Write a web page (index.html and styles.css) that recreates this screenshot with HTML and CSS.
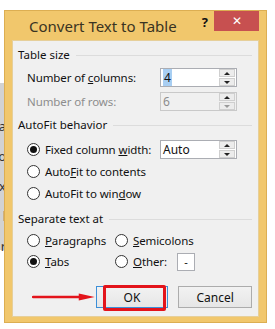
FILE: index.html
```html
<!DOCTYPE html>
<html lang="en">
<head>
  <meta charset="UTF-8">
  <title>Convert Text to Table</title>
  <link rel="stylesheet" href="styles.css">
</head>
<body>
  <div class="backdrop">
    <span>a</span>
    <span>o</span>
    <span>x</span>
    <span>l</span>
    <span>r</span>
  </div>

  <div class="dialog">
    <div class="titlebar">
      <div class="title">Convert Text to Table</div>
      <div class="help">?</div>
      <div class="close">&#x2715;</div>
    </div>

    <div class="client">
      <div class="group-head"><span>Table size</span></div>
      <div class="row field-row">
        <label class="lbl">Number of <u>c</u>olumns:</label>
        <div class="spin">
          <span class="val"><span class="sel">4</span></span>
          <div class="spin-btns">
            <span class="up"></span>
            <span class="down"></span>
          </div>
        </div>
      </div>
      <div class="row field-row disabled">
        <label class="lbl">Number of rows:</label>
        <div class="spin">
          <span class="val">6</span>
          <div class="spin-btns">
            <span class="up"></span>
            <span class="down"></span>
          </div>
        </div>
      </div>

      <div class="group-head autofit"><span>AutoFit behavior</span></div>
      <div class="row radio-row">
        <span class="radio on"></span>
        <span class="lbl radio-lbl">Fixed column <u>w</u>idth:</span>
        <div class="spin">
          <span class="val">Auto</span>
          <div class="spin-btns">
            <span class="up"></span>
            <span class="down"></span>
          </div>
        </div>
      </div>
      <div class="row radio-row">
        <span class="radio"></span>
        <span class="lbl">Auto<u>F</u>it to contents</span>
      </div>
      <div class="row radio-row">
        <span class="radio"></span>
        <span class="lbl">AutoFit to win<u>d</u>ow</span>
      </div>

      <div class="group-head separate"><span>Separate text at</span></div>
      <div class="row sep-row">
        <div class="opt">
          <span class="radio"></span>
          <span class="lbl"><u>P</u>aragraphs</span>
        </div>
        <div class="opt">
          <span class="radio"></span>
          <span class="lbl"><u>S</u>emicolons</span>
        </div>
      </div>
      <div class="row sep-row">
        <div class="opt">
          <span class="radio on"></span>
          <span class="lbl"><u>T</u>abs</span>
        </div>
        <div class="opt">
          <span class="radio"></span>
          <span class="lbl other-lbl"><u>O</u>ther:</span>
          <span class="other-box">-</span>
        </div>
      </div>

      <div class="buttons">
        <svg class="arrow" width="64" height="10" viewBox="0 0 64 10">
          <line x1="1" y1="5" x2="50" y2="5" stroke="#e3141b" stroke-width="2.5" stroke-linecap="round"/>
          <polygon points="47,1.5 63,5 47,8.5" fill="#e3141b"/>
        </svg>
        <button class="btn ok">OK<span class="mark"></span></button>
        <button class="btn">Cancel</button>
      </div>
    </div>
  </div>
</body>
</html>
```

FILE: styles.css
```css
* {
  margin: 0;
  padding: 0;
  box-sizing: border-box;
}
html, body {
  background: #fff;
  font-family: 'Noto Sans', 'Open Sans', sans-serif;
  font-size: 11px;
  color: #111;
  overflow: hidden;
}
body {
  width: 275px;
  height: 329px;
  position: relative;
}
.backdrop {
  position: absolute;
  left: 0;
  top: 83px;
  width: 14px;
  height: 167px;
  background: #d2d2d2;
  display: flex;
  flex-direction: column;
  align-items: flex-end;
  padding-top: 34px;
  gap: 12px;
  font-size: 13px;
  line-height: 18px;
  color: #333;
}
.backdrop span {
  margin-right: 8px;
}
.dialog {
  position: relative;
  margin: 10px 0 0 4px;
  width: 263px;
  height: 313px;
  background: #f1c76c;
  border: 1px solid #dcae52;
  display: flex;
  flex-direction: column;
}
.titlebar {
  height: 29px;
  display: flex;
  align-items: flex-start;
}
.title {
  margin: 5px 0 0 24px;
  font-size: 15px;
  color: #3a3322;
  line-height: 20px;
}
.help {
  margin: 3px 0 0 25px;
  font-size: 13px;
  font-weight: bold;
  color: #111;
  line-height: 16px;
}
.close {
  margin-left: auto;
  margin-right: 7px;
  width: 45px;
  height: 20px;
  background: #c75050;
  color: #fff;
  font-size: 12px;
  text-align: center;
  line-height: 20px;
}
.client {
  flex: 1;
  margin: 0 7px 5px 7px;
  background: #f0f0f0;
  border: 1px solid #e6cf9a;
  padding: 7px 6px 0 5px;
  display: flex;
  flex-direction: column;
}
.group-head {
  height: 14px;
  display: flex;
  align-items: center;
  gap: 6px;
  color: #111;
  line-height: 14px;
  font-size: 11.5px;
}
.group-head::after {
  content: "";
  flex: 1;
  height: 1px;
  background: #dcdcdc;
}
.row {
  display: flex;
  align-items: center;
}
.lbl {
  white-space: nowrap;
  font-size: 11.5px;
  letter-spacing: -0.1px;
}
.field-row {
  height: 19px;
  padding-left: 9px;
  margin-top: 6px;
}
.field-row + .field-row {
  margin-top: 5px;
}
.field-row .spin {
  margin-left: auto;
}
.disabled .lbl,
.disabled .val {
  color: #8d8d8d;
}
.spin {
  width: 77px;
  height: 19px;
  border: 1px solid #abadb3;
  background: #fff;
  display: flex;
  align-items: center;
  margin-right: 15px;
}
.disabled .spin {
  background: #f0f0f0;
  border-color: #c9c9c9;
}
.val {
  flex: 1;
  padding-left: 2px;
  font-size: 12px;
  line-height: 15px;
}
.sel {
  background: #a8cef2;
  padding: 0 1px;
}
.spin-btns {
  width: 16px;
  height: 17px;
  margin-right: 1px;
  display: flex;
  flex-direction: column;
  gap: 1px;
}
.spin-btns span {
  flex: 1;
  background: #ececec;
  border: 1px solid #cfcfcf;
  position: relative;
}
.spin-btns span::after {
  content: "";
  position: absolute;
  left: 4px;
  top: 2px;
  border-left: 3px solid transparent;
  border-right: 3px solid transparent;
}
.spin-btns .up::after {
  border-bottom: 3px solid #222;
}
.spin-btns .down::after {
  border-top: 3px solid #222;
}
.disabled .spin-btns .down::after {
  border-top-color: #999;
}
.autofit {
  margin-top: 7px;
}
.radio-row {
  height: 22px;
  padding-left: 9px;
}
.autofit + .radio-row {
  margin-top: 6px;
}
.radio {
  width: 13px;
  height: 13px;
  border-radius: 50%;
  border: 1px solid #333;
  background: #fff;
  margin-right: 5px;
  flex-shrink: 0;
  position: relative;
}
.radio.on::after {
  content: "";
  position: absolute;
  left: 2px;
  top: 2px;
  width: 7px;
  height: 7px;
  border-radius: 50%;
  background: #111;
}
.radio-row .spin {
  margin-left: auto;
}
.separate {
  margin-top: 8px;
}
.sep-row {
  height: 21px;
  padding-left: 9px;
}
.separate + .sep-row {
  margin-top: 4px;
}
.opt {
  display: flex;
  align-items: center;
}
.opt:first-child {
  width: 88px;
}
.other-lbl {
  width: 44px;
}
.other-box {
  width: 18px;
  height: 18px;
  background: #fff;
  border: 1px solid #abadb3;
  text-align: center;
  line-height: 15px;
}
.buttons {
  margin-top: 14px;
  display: flex;
  align-items: center;
  padding-left: 14px;
}
.arrow {
  display: block;
}
.btn {
  font-family: inherit;
  font-size: 12px;
  color: #111;
  width: 74px;
  height: 22px;
  border: 1px solid #acacac;
  background: linear-gradient(#f2f2f2, #e6e6e6);
  position: relative;
}
.ok {
  width: 73px;
  border-color: #3c8fd8;
  margin-right: 10px;
}
.mark {
  position: absolute;
  left: 6px;
  top: -2px;
  width: 63px;
  height: 26px;
  border: 3px solid #e3141b;
  border-radius: 2px;
}
```
